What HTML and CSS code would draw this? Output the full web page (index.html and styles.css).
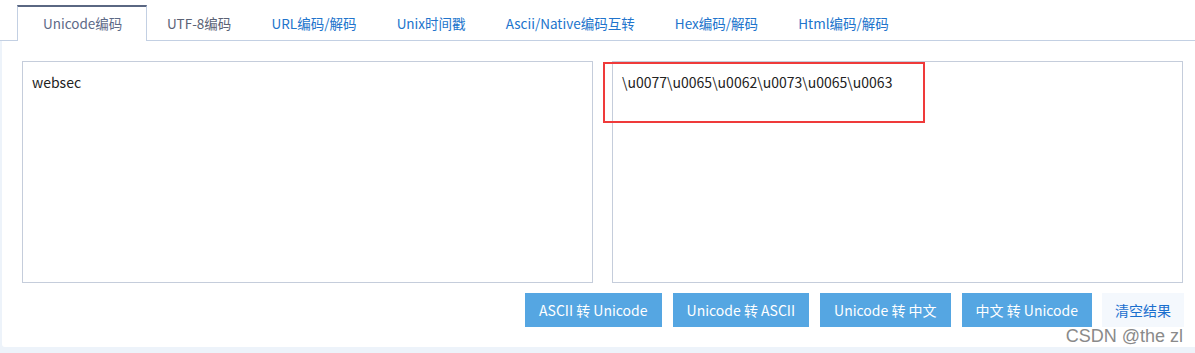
FILE: index.html
```html
<!DOCTYPE html>
<html lang="zh-CN">
<head>
<meta charset="utf-8">
<title>Unicode编码</title>
<link rel="stylesheet" href="styles.css">
</head>
<body>
<div class="wrap">
  <div class="tabs">
    <div class="tab active">Unicode编码</div>
    <div class="tab grey">UTF-8编码</div>
    <div class="tab">URL编码/解码</div>
    <div class="tab">Unix时间戳</div>
    <div class="tab">Ascii/Native编码互转</div>
    <div class="tab">Hex编码/解码</div>
    <div class="tab">Html编码/解码</div>
  </div>
  <div class="content">
    <div class="panes">
      <div class="pane">websec</div>
      <div class="pane out">\u0077\u0065\u0062\u0073\u0065\u0063<div class="mark"></div></div>
    </div>
    <div class="actions">
      <button class="btn">ASCII 转 Unicode</button>
      <button class="btn">Unicode 转 ASCII</button>
      <button class="btn">Unicode 转 中文</button>
      <button class="btn">中文 转 Unicode</button>
      <button class="btn light">清空结果</button>
    </div>
    <div class="watermark">CSDN @the zl</div>
  </div>
</div>
</body>
</html>
```
FILE: styles.css
```css
html, body {
  margin: 0;
  padding: 0;
}
body {
  background: #edf3fa;
  font-family: "Noto Sans CJK SC", "Noto Sans", sans-serif;
  font-size: 14px;
  color: #333;
  width: 1195px;
  height: 353px;
  overflow: hidden;
}
.wrap {
  margin-left: 2px;
  background: #fff;
  height: 347px;
  border-bottom-left-radius: 3px;
}
.tabs {
  display: flex;
  align-items: flex-end;
  height: 40px;
  border-bottom: 1px solid #c3d0e3;
  margin-left: -2px;
  padding-left: 17px;
  background: #fff;
}
.tab {
  height: 35px;
  line-height: 36px;
  padding: 0 20.1px;
  font-size: 13.5px;
  color: #2174cc;
  white-space: nowrap;
  box-sizing: border-box;
}
.tab.grey {
  color: #5b6275;
}
.tab.active {
  height: 36px;
  margin-bottom: -1px;
  padding: 0 23.5px 0 25px;
  color: #5d6a87;
  background: #fff;
  border: 1px solid #c3d0e3;
  border-top: 2px solid #5a6782;
  border-bottom: none;
  line-height: 33px;
}
.content {
  position: relative;
  padding: 20px 11px 20px 20px;
}
.panes {
  display: grid;
  grid-template-columns: 571px 571px;
  gap: 19px;
}
.pane {
  position: relative;
  height: 222px;
  box-sizing: border-box;
  border: 1px solid #c5cddb;
  padding: 10px 9px;
  color: #222;
  line-height: 20px;
}
.mark {
  position: absolute;
  left: -10px;
  top: 0px;
  width: 322px;
  height: 61px;
  box-sizing: border-box;
  border: 2px solid #ef3a3a;
}
.actions {
  display: flex;
  justify-content: flex-end;
  gap: 11px;
  margin-top: 10px;
}
.btn {
  height: 34px;
  border: none;
  margin: 0;
  padding: 0 14px;
  background: #55a6e2;
  color: #fff;
  font-family: inherit;
  font-size: 14px;
}
.btn.light {
  margin-left: -1px;
  background: #f4f8fd;
  color: #1a6fce;
  padding: 0 13px;
}
.watermark {
  position: absolute;
  right: 12px;
  bottom: 0px;
  font-family: "Liberation Sans", Arial, sans-serif;
  font-size: 18px;
  color: #8a8a8a;
  line-height: 22px;
}
```
